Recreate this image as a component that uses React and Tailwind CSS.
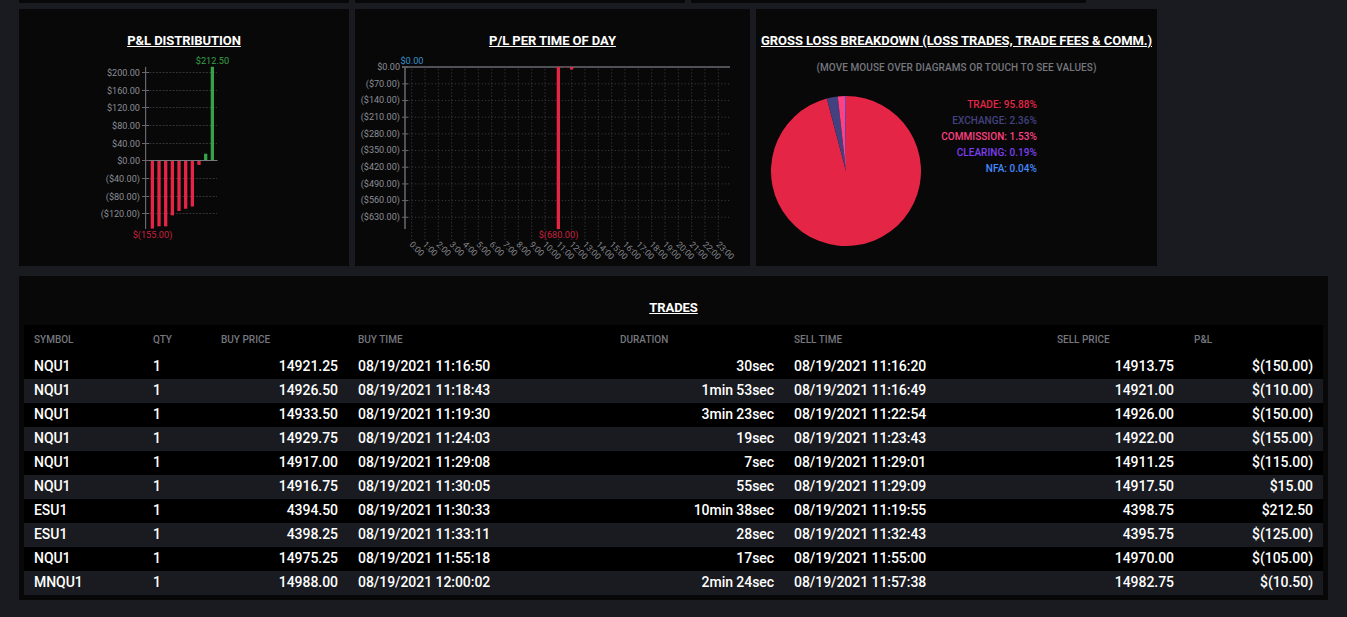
import React from 'react';
import clsx from 'clsx';

const TRADES = [
  { symbol: 'NQU1', qty: 1, buyPrice: '14921.25', buyTime: '08/19/2021 11:16:50', duration: '30sec', sellTime: '08/19/2021 11:16:20', sellPrice: '14913.75', pnl: '$(150.00)' },
  { symbol: 'NQU1', qty: 1, buyPrice: '14926.50', buyTime: '08/19/2021 11:18:43', duration: '1min 53sec', sellTime: '08/19/2021 11:16:49', sellPrice: '14921.00', pnl: '$(110.00)' },
  { symbol: 'NQU1', qty: 1, buyPrice: '14933.50', buyTime: '08/19/2021 11:19:30', duration: '3min 23sec', sellTime: '08/19/2021 11:22:54', sellPrice: '14926.00', pnl: '$(150.00)' },
  { symbol: 'NQU1', qty: 1, buyPrice: '14929.75', buyTime: '08/19/2021 11:24:03', duration: '19sec', sellTime: '08/19/2021 11:23:43', sellPrice: '14922.00', pnl: '$(155.00)' },
  { symbol: 'NQU1', qty: 1, buyPrice: '14917.00', buyTime: '08/19/2021 11:29:08', duration: '7sec', sellTime: '08/19/2021 11:29:01', sellPrice: '14911.25', pnl: '$(115.00)' },
  { symbol: 'NQU1', qty: 1, buyPrice: '14916.75', buyTime: '08/19/2021 11:30:05', duration: '55sec', sellTime: '08/19/2021 11:29:09', sellPrice: '14917.50', pnl: '$15.00' },
  { symbol: 'ESU1', qty: 1, buyPrice: '4394.50', buyTime: '08/19/2021 11:30:33', duration: '10min 38sec', sellTime: '08/19/2021 11:19:55', sellPrice: '4398.75', pnl: '$212.50' },
  { symbol: 'ESU1', qty: 1, buyPrice: '4398.25', buyTime: '08/19/2021 11:33:11', duration: '28sec', sellTime: '08/19/2021 11:32:43', sellPrice: '4395.75', pnl: '$(125.00)' },
  { symbol: 'NQU1', qty: 1, buyPrice: '14975.25', buyTime: '08/19/2021 11:55:18', duration: '17sec', sellTime: '08/19/2021 11:55:00', sellPrice: '14970.00', pnl: '$(105.00)' },
  { symbol: 'MNQU1', qty: 1, buyPrice: '14988.00', buyTime: '08/19/2021 12:00:02', duration: '2min 24sec', sellTime: '08/19/2021 11:57:38', sellPrice: '14982.75', pnl: '$(10.50)' },
];

const COLUMNS = [
  { key: 'symbol', label: 'SYMBOL', width: 'w-[119px]' },
  { key: 'qty', label: 'QTY', width: 'w-[68px]' },
  { key: 'buyPrice', label: 'BUY PRICE', width: 'w-[137px]', right: true },
  { key: 'buyTime', label: 'BUY TIME', width: 'w-[262px]' },
  { key: 'duration', label: 'DURATION', width: 'w-[174px]', right: true },
  { key: 'sellTime', label: 'SELL TIME', width: 'w-[263px]' },
  { key: 'sellPrice', label: 'SELL PRICE', width: 'w-[137px]', right: true },
  { key: 'pnl', label: 'P&L', width: 'w-[139px]', right: true },
];

const DISTRIBUTION = [-155, -150, -150, -125, -115, -110, -105, -10.5, 15, 212.5];

const BREAKDOWN = [
  { label: 'TRADE', value: 95.88, fill: 'fill-[#e42545]', text: 'text-[#e42545]' },
  { label: 'EXCHANGE', value: 2.36, fill: 'fill-[#444180]', text: 'text-[#444180]' },
  { label: 'COMMISSION', value: 1.53, fill: 'fill-[#ff4081]', text: 'text-[#ff4081]' },
  { label: 'CLEARING', value: 0.19, fill: 'fill-[#7c4dff]', text: 'text-[#7c3ff0]' },
  { label: 'NFA', value: 0.04, fill: 'fill-[#448aff]', text: 'text-[#448aff]' },
];

const money = (v) => (v < 0 ? `($${Math.abs(v).toFixed(2)})` : `$${v.toFixed(2)}`);

const Card = ({ title, className, children }) => (
  <section className={clsx('shrink-0 bg-[#080808]', className)}>
    <h2 className="h-10 pt-[22px] text-center text-[13px] leading-5 font-bold tracking-[-0.05px] whitespace-nowrap text-white underline">
      {title}
    </h2>
    {children}
  </section>
);

const DistributionChart = () => {
  const zero = 151.3;
  const scale = 0.4403;
  const ticks = [200, 160, 120, 80, 40, 0, -40, -80, -120];
  const tickY = (t) => Math.round(zero - t * scale) + 0.5;

  return (
    <svg width="330" height="217" className="block" viewBox="0 40 330 217">
      {/* Grid */}
      {ticks.filter((t) => t !== 0).map((t) => (
        <line key={t} x1="127" x2="198" y1={tickY(t)} y2={tickY(t)} stroke="#333336" strokeDasharray="2 1.33" />
      ))}

      {/* Bars */}
      {DISTRIBUTION.map((v, i) => (
        <rect
          key={i}
          x={131.7 + i * 6.667}
          y={v < 0 ? zero : zero - v * scale}
          width="3.3"
          height={Math.abs(v) * scale}
          fill={v < 0 ? '#e42545' : '#37a148'}
        />
      ))}

      {/* Axes */}
      <line x1="126.6" x2="126.6" y1="58" y2="220" stroke="#66676d" strokeWidth="1.2" />
      <line x1="124" x2="198.5" y1="151.5" y2="151.5" stroke="#77787e" />
      {ticks.map((t) => (
        <g key={t}>
          <line x1="123" x2="130" y1={tickY(t)} y2={tickY(t)} stroke="#66676d" />
          <text x="121" y={tickY(t) + 3.1} textAnchor="end" fontSize="9.1" fill="#8b8e96">{money(t)}</text>
        </g>
      ))}
      <text x="193.5" y="55" textAnchor="middle" fontSize="9.2" fill="#37a148">$212.50</text>
      <text x="133.5" y="229" textAnchor="middle" fontSize="9.2" fill="#c9213e">$(155.00)</text>
    </svg>
  );
};

const TimeOfDayChart = () => {
  const hours = Array.from({ length: 24 }, (_, h) => h);
  const ticks = Array.from({ length: 10 }, (_, i) => -70 * i);
  const hourX = (h) => 56.67 + h * 13.333;
  const tickY = (t) => 58.2 - t * 0.2382;

  return (
    <svg width="395" height="217" className="block" viewBox="0 40 395 217">
      {/* Grid */}
      {hours.map((h) => (
        <line key={h} x1={hourX(h)} x2={hourX(h)} y1="60" y2="232" stroke="#3a3a3d" strokeDasharray="1.2 2.13" />
      ))}
      {ticks.slice(1).map((t) => (
        <line key={t} x1="50" x2="375" y1={tickY(t)} y2={tickY(t)} stroke="#3a3a3d" strokeDasharray="1.2 2.13" />
      ))}

      {/* Axes */}
      <line x1="50" x2="50" y1="58" y2="220" stroke="#505156" strokeWidth="2" />
      <line x1="47" x2="375" y1="58" y2="58" stroke="#505156" strokeWidth="2" />
      {ticks.map((t) => (
        <g key={t}>
          <line x1="47" x2="53" y1={tickY(t)} y2={tickY(t)} stroke="#66676d" />
          <text x="45" y={tickY(t) + 2.8} textAnchor="end" fontSize="9.1" fill="#8b8e96">{money(t)}</text>
        </g>
      ))}
      {hours.map((h) => (
        <text
          key={h}
          fontSize="8.6"
          fill="#85878e"
          transform={`translate(${hourX(h) - 2.7} 236) rotate(45)`}
        >
          {`${h}:00`}
        </text>
      ))}

      {/* Bars */}
      <rect x="201.7" y="58" width="3.3" height="162" fill="#e42545" />
      <rect x="208.5" y="58" width="3.3" height="1" fill="#7c2234" />
      <rect x="215" y="58" width="3.3" height="2.5" fill="#e42545" />
      <text x="57" y="55" textAnchor="middle" fontSize="9.2" fill="#3b92cc">$0.00</text>
      <text x="203.5" y="229" textAnchor="middle" fontSize="9.2" fill="#c9213e">$(680.00)</text>
    </svg>
  );
};

const BreakdownPie = () => {
  const point = (pct) => {
    const a = (pct / 100) * Math.PI * 2;
    return `${75 + 75 * Math.sin(a)} ${75 - 75 * Math.cos(a)}`;
  };
  let total = 0;

  return (
    <svg width="150" height="150" viewBox="0 0 150 150" className="shrink-0">
      {BREAKDOWN.map(({ label, value, fill }) => {
        const start = total;
        total += value;
        return (
          <path
            key={label}
            className={fill}
            d={`M75 75 L${point(start)} A75 75 0 ${value > 50 ? 1 : 0} 1 ${point(total)} Z`}
          />
        );
      })}
    </svg>
  );
};

const TradesTable = () => (
  <table className="mx-[5px] w-[1299px] table-fixed border-collapse bg-black text-white">
    <thead>
      <tr className="h-[30px] text-[10px] text-[#75777e]">
        {COLUMNS.map((col) => (
          <th key={col.key} className={clsx('px-2.5 pt-0 pb-0.5 text-left font-medium', col.width)}>{col.label}</th>
        ))}
      </tr>
    </thead>
    <tbody>
      {TRADES.map((trade, i) => (
        <tr key={i} className="h-6 text-sm font-medium tracking-[-0.05px] even:bg-[#1a1b20]">
          {COLUMNS.map((col) => (
            <td key={col.key} className={clsx('h-6 px-2.5 py-0 whitespace-nowrap', col.right && 'text-right')}>
              <div className="h-6 leading-[23px]">{trade[col.key]}</div>
            </td>
          ))}
        </tr>
      ))}
    </tbody>
  </table>
);

export default function App() {
  return (
    <main className="h-[617px] w-[1347px] overflow-hidden bg-[#1a1b20] px-[19px] font-['Roboto',sans-serif]">
      {/* Bottom edge of the previous row of cards */}
      <div className="flex h-[3px] gap-1.5">
        <div className="w-[330px] bg-[#080808]" />
        <div className="w-[330px] bg-[#080808]" />
        <div className="w-[395px] bg-[#080808]" />
      </div>

      <div className="mt-1.5 flex gap-1.5">
        <Card title="P&L DISTRIBUTION" className="h-[257px] w-[330px]">
          <DistributionChart />
        </Card>
        <Card title="P/L PER TIME OF DAY" className="h-[257px] w-[395px]">
          <TimeOfDayChart />
        </Card>
        <Card title="GROSS LOSS BREAKDOWN (LOSS TRADES, TRADE FEES & COMM.)" className="h-[257px] w-[401px]">
          <p className="mt-[11px] text-center text-[10px] leading-4 font-medium tracking-[0.08px] text-[#75777e]">
            (MOVE MOUSE OVER DIAGRAMS OR TOUCH TO SEE VALUES)
          </p>
          <div className="mt-5 ml-[15px] flex">
            <BreakdownPie />
            <ul className="w-[116px] pt-px text-right text-[10px] leading-4 font-medium tracking-[0.05px]">
              {BREAKDOWN.map(({ label, value, text }) => (
                <li key={label} className={text}>{`${label}: ${value.toFixed(2)}%`}</li>
              ))}
            </ul>
          </div>
        </Card>
      </div>

      <Card title="TRADES" className="mt-2.5 h-[324px] w-[1309px]">
        <div className="mt-[9px]">
          <TradesTable />
        </div>
      </Card>
    </main>
  );
}
